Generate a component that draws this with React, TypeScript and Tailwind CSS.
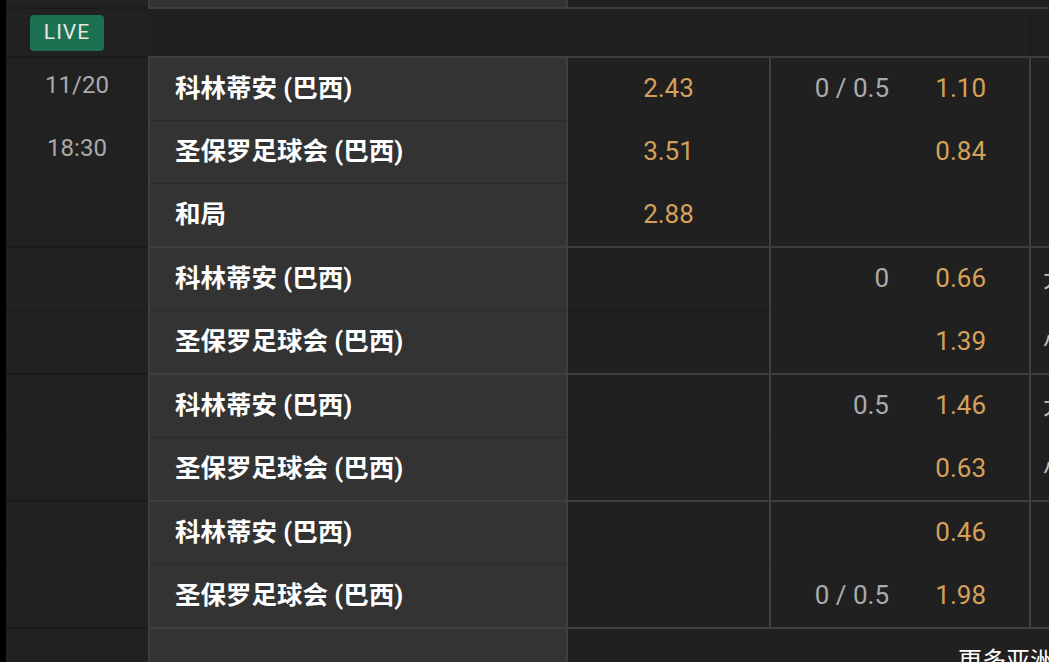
type Row = {
  date?: string;
  team: string;
  odd?: string;
  line?: string;
  hodd?: string;
  side?: string;
};

type Group = { rows: Row[]; inner: boolean };

const groups: Group[] = [
  {
    inner: false,
    rows: [
      { date: "11/20", team: "科林蒂安 (巴西)", odd: "2.43", line: "0 / 0.5", hodd: "1.10" },
      { date: "18:30", team: "圣保罗足球会 (巴西)", odd: "3.51", hodd: "0.84" },
      { team: "和局", odd: "2.88" },
    ],
  },
  {
    inner: true,
    rows: [
      { team: "科林蒂安 (巴西)", line: "0", hodd: "0.66", side: "大 2.5" },
      { team: "圣保罗足球会 (巴西)", hodd: "1.39", side: "小 2.5" },
    ],
  },
  {
    inner: true,
    rows: [
      { team: "科林蒂安 (巴西)", line: "0.5", hodd: "1.46", side: "大 2.5" },
      { team: "圣保罗足球会 (巴西)", hodd: "0.63", side: "小 2.5" },
    ],
  },
  {
    inner: true,
    rows: [
      { team: "科林蒂安 (巴西)", hodd: "0.46" },
      { team: "圣保罗足球会 (巴西)", line: "0 / 0.5", hodd: "1.98" },
    ],
  },
];

const num = "font-['Roboto',sans-serif]";
const cjk = "font-['Roboto','Noto_Sans_CJK_SC',sans-serif]";

// non-last rows are 63px (62 + 1px separator), last row 62px
const rowH = (i: number, n: number, sep: string) =>
  i < n - 1 ? `h-[63px] ${sep}` : "h-[62px]";

function RowGroup({ g }: { g: Group }) {
  const n = g.rows.length;
  return (
    <div className="flex shrink-0">
      {/* date */}
      <div className="w-[142px] shrink-0 bg-[#212121] border-b-2 border-[#1b1b1b] flex flex-col">
        {g.rows.map((r, i) => (
          <div
            key={i}
            className={`${rowH(i, n, g.inner ? "border-b border-[#1b1b1b]" : "")} flex items-center justify-center pb-[10px] text-[24px] text-[#a9a9a9] ${num}`}
          >
            {r.date}
          </div>
        ))}
      </div>

      {/* team */}
      <div className="w-[420px] shrink-0 bg-[#333333] border-x-2 border-b-2 border-[#3e3e3e] flex flex-col">
        {g.rows.map((r, i) => (
          <div
            key={i}
            className={`${rowH(i, n, "border-b border-[#2a2a2a]")} flex items-center pl-[25px] pb-[2px] text-[25.5px] font-bold text-white ${cjk}`}
          >
            {r.team}
          </div>
        ))}
      </div>

      {/* 1x2 odds */}
      <div className="w-[203px] shrink-0 bg-[#202020] border-r-2 border-b-2 border-[#3e3e3e] flex flex-col">
        {g.rows.map((r, i) => (
          <div
            key={i}
            className={`${rowH(i, n, g.inner ? "border-b border-[#1a1a1a]" : "")} flex items-center justify-center pb-[2px] text-[26px] text-[#d5a05a] ${num}`}
          >
            {r.odd}
          </div>
        ))}
      </div>

      {/* handicap */}
      <div className="w-[260px] shrink-0 bg-[#202020] border-r-2 border-b-2 border-[#3e3e3e] flex flex-col">
        {g.rows.map((r, i) => (
          <div
            key={i}
            className={`${rowH(i, n, "")} flex items-center justify-end pr-[43px] pb-[2px] text-[26px] ${num}`}
          >
            <span className="text-[#ababab] whitespace-pre">{r.line}</span>
            <span className="w-[97px] text-right text-[#d5a05a]">{r.hodd}</span>
          </div>
        ))}
      </div>

      {/* over / under, partly outside the window */}
      <div className="flex-1 bg-[#202020] border-b-2 border-[#3e3e3e] flex flex-col">
        {g.rows.map((r, i) => (
          <div
            key={i}
            className={`${rowH(i, n, "")} flex items-center pl-[12px] pb-[2px] whitespace-nowrap text-[24px] text-[#bdbdbd] ${cjk}`}
          >
            {r.side}
          </div>
        ))}
      </div>
    </div>
  );
}

export default function App() {
  return (
    <div className="w-[1049px] h-[662px] overflow-hidden bg-black flex">
      <div className="w-[6px] shrink-0 bg-black" />
      <div className="w-[1100px] shrink-0 flex flex-col">
        {/* previous match tail */}
        <div className="flex h-[9px] shrink-0">
          <div className="w-[142px] shrink-0 bg-[#212121] border-b-2 border-[#1b1b1b]" />
          <div className="w-[420px] shrink-0 bg-[#333333] border-x-2 border-b-2 border-[#3e3e3e]" />
          <div className="flex-1 bg-[#202020] border-b-2 border-[#3e3e3e]" />
        </div>

        {/* live header */}
        <div className="flex h-[49px] shrink-0">
          <div className="w-[142px] shrink-0 bg-[#212121] border-b-2 border-[#1b1b1b] flex items-start pt-[6px] pl-[24px]">
            <span
              className={`h-[36px] w-[74px] rounded-[4px] bg-[#1b7150] flex items-center justify-center text-[21px] tracking-[1px] text-[#e8e8e8] ${num}`}
            >
              LIVE
            </span>
          </div>
          <div className="flex-1 flex flex-col">
            <div className="flex-1 bg-[#202020] flex">
              <div className="w-[883px] border-r border-[#1a1a1a]" />
            </div>
            <div className="h-[2px] bg-[#3e3e3e]" />
          </div>
        </div>

        {groups.map((g, i) => (
          <RowGroup key={i} g={g} />
        ))}

        {/* more markets */}
        <div className="flex flex-1">
          <div className="w-[142px] shrink-0 bg-[#212121]" />
          <div className="w-[420px] shrink-0 bg-[#333333] border-x-2 border-[#3e3e3e]" />
          <div className={`flex-1 bg-[#202020] pl-[390px] pt-[17px] text-[24px] leading-[30px] text-white whitespace-nowrap ${cjk}`}>
            更多亚洲让球盘
          </div>
        </div>
      </div>
    </div>
  );
}
